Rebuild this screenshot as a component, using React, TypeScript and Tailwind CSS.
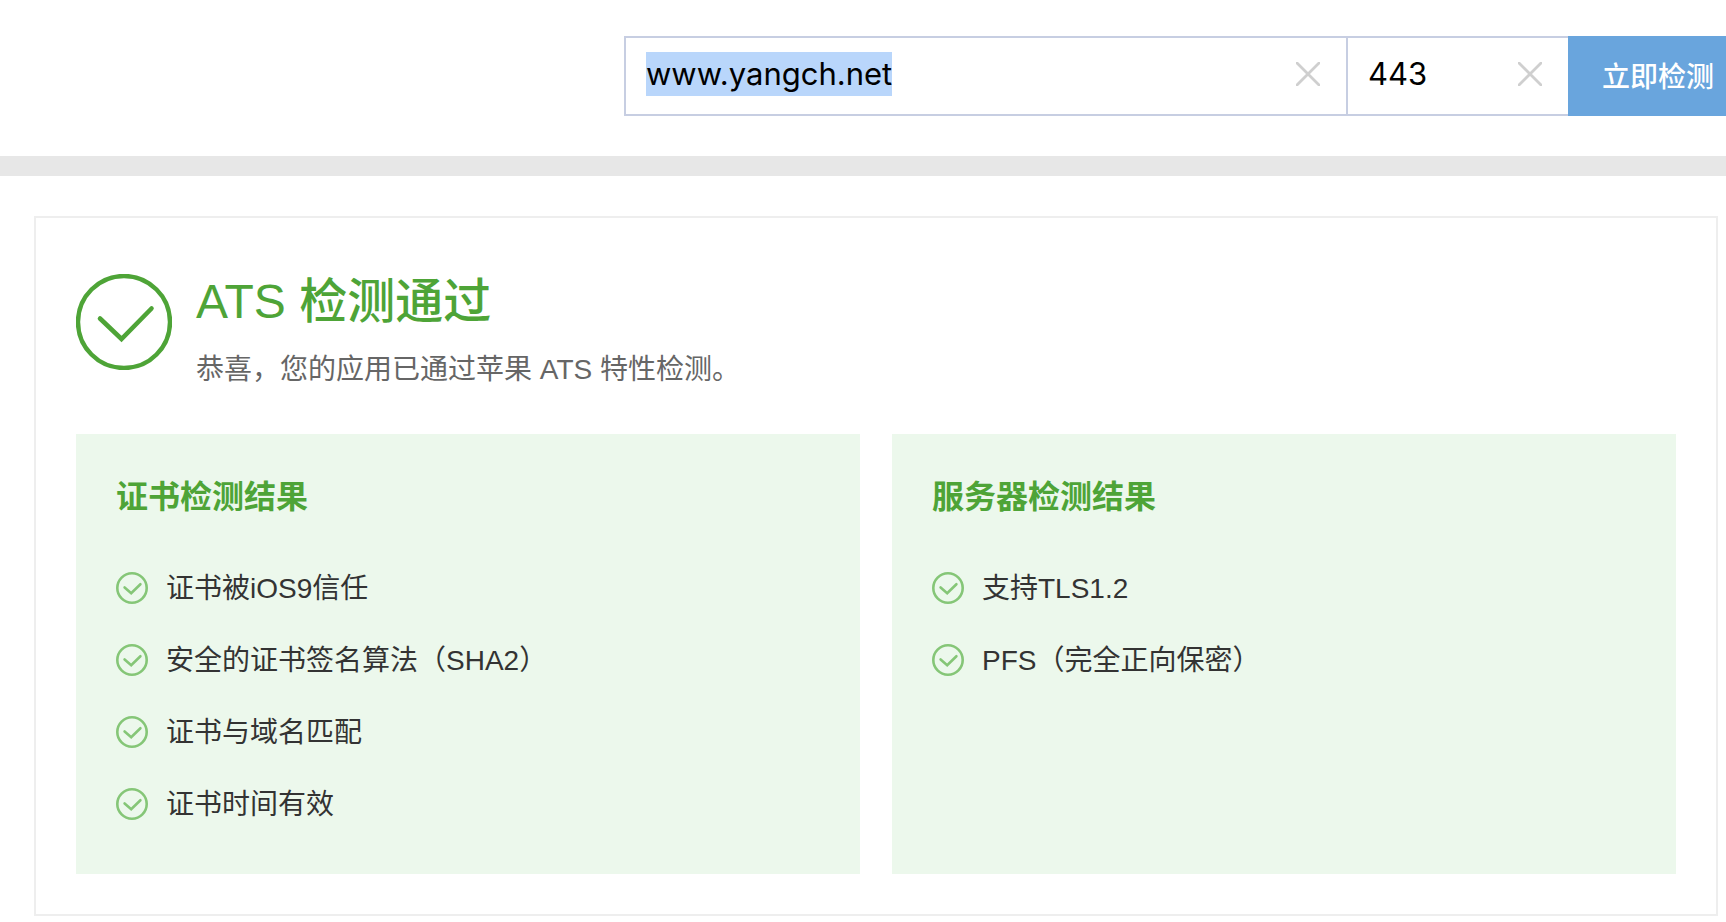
import { useEffect, useRef, useState } from "react";

const certResults = [
  "证书被iOS9信任",
  "安全的证书签名算法（SHA2）",
  "证书与域名匹配",
  "证书时间有效",
];

const serverResults = ["支持TLS1.2", "PFS（完全正向保密）"];

const ClearButton = ({ label, onClick }: { label: string; onClick: () => void }) => (
  <button type="button" aria-label={label} onClick={onClick} className="shrink-0">
    <svg viewBox="0 0 24 24" className="w-6 h-6" fill="none" stroke="#cfcfcf" strokeWidth="2.8">
      <path d="M0 0L24 24M24 0L0 24" />
    </svg>
  </button>
);

const ResultPanel = ({ title, items }: { title: string; items: string[] }) => (
  <section className="bg-[#ecf8ec] px-10 pt-10 pb-[34px]">
    <h2 className="text-[32px] leading-[46px] font-bold text-[#4ea437]">{title}</h2>
    <ul className="mt-8">
      {items.map((item) => (
        <li key={item} className="flex items-center gap-[18px] h-[72px] text-[28px] text-[#333]">
          <svg viewBox="0 0 32 32" className="w-8 h-8 shrink-0" fill="none" stroke="#85c677">
            <circle cx="16" cy="16" r="14.7" strokeWidth="2.6" />
            <path d="M8.6 15.4L15.2 21.2L24.4 12.2" strokeWidth="2.6" strokeLinecap="round" />
          </svg>
          <span className="pt-0.5">{item}</span>
        </li>
      ))}
    </ul>
  </section>
);

const App = () => {
  const [host, setHost] = useState("www.yangch.net");
  const [port, setPort] = useState("443");
  const hostRef = useRef<HTMLInputElement>(null);

  useEffect(() => {
    hostRef.current?.focus();
    hostRef.current?.select();
  }, []);

  return (
    <div className="bg-white font-['Liberation_Sans','Noto_Sans_CJK_SC',sans-serif]">
      <form
        onSubmit={(e) => e.preventDefault()}
        className="flex justify-end pt-9 pb-10 text-black"
      >
        <div className="flex items-center w-[724px] h-20 pl-5 pr-[26px] pb-1 border-2 border-[#c7cee2]">
          <input
            ref={hostRef}
            type="text"
            aria-label="域名"
            value={host}
            onChange={(e) => setHost(e.target.value)}
            className="flex-1 min-w-0 h-11 font-['Inter','Noto_Sans_CJK_SC',sans-serif] text-[31px] leading-[44px] outline-none selection:bg-[#b9d6fb] selection:text-black"
          />
          <ClearButton label="清空域名" onClick={() => setHost("")} />
        </div>
        <div className="flex items-center w-[220px] h-20 pl-5 pr-[26px] pb-1 border-y-2 border-[#c7cee2]">
          <input
            type="text"
            aria-label="端口"
            value={port}
            onChange={(e) => setPort(e.target.value)}
            className="flex-1 min-w-0 h-11 font-['Inter','Noto_Sans_CJK_SC',sans-serif] text-[31px] leading-[44px] outline-none"
          />
          <ClearButton label="清空端口" onClick={() => setPort("")} />
        </div>
        <button
          type="submit"
          className="h-20 pl-[34px] pr-3 pt-1 bg-[#69a5dd] text-white text-[28px] font-medium whitespace-nowrap"
        >
          立即检测
        </button>
      </form>

      <div className="h-5 bg-[#e7e7e7]" />

      <main className="mt-10 ml-[34px] mr-2 border-2 border-[#eee] px-10 pb-10">
        <div className="flex gap-6 pt-14">
          <svg viewBox="0 0 96 96" className="w-24 h-24 shrink-0" fill="none" stroke="#4ea437">
            <circle cx="48" cy="48" r="46" strokeWidth="4.4" />
            <path d="M24 44.5L45.5 65L75.5 34.5" strokeWidth="4.6" strokeLinecap="round" />
          </svg>
          <div>
            <h1 className="text-[48px] leading-[56px] font-medium text-[#4ea437]">ATS 检测通过</h1>
            <p className="mt-[18px] text-[28px] leading-[44px] text-[#666]">
              恭喜，您的应用已通过苹果 ATS 特性检测。
            </p>
          </div>
        </div>

        <div className="grid grid-cols-2 gap-8 mt-[42px]">
          <ResultPanel title="证书检测结果" items={certResults} />
          <ResultPanel title="服务器检测结果" items={serverResults} />
        </div>
      </main>
    </div>
  );
};

export default App;
